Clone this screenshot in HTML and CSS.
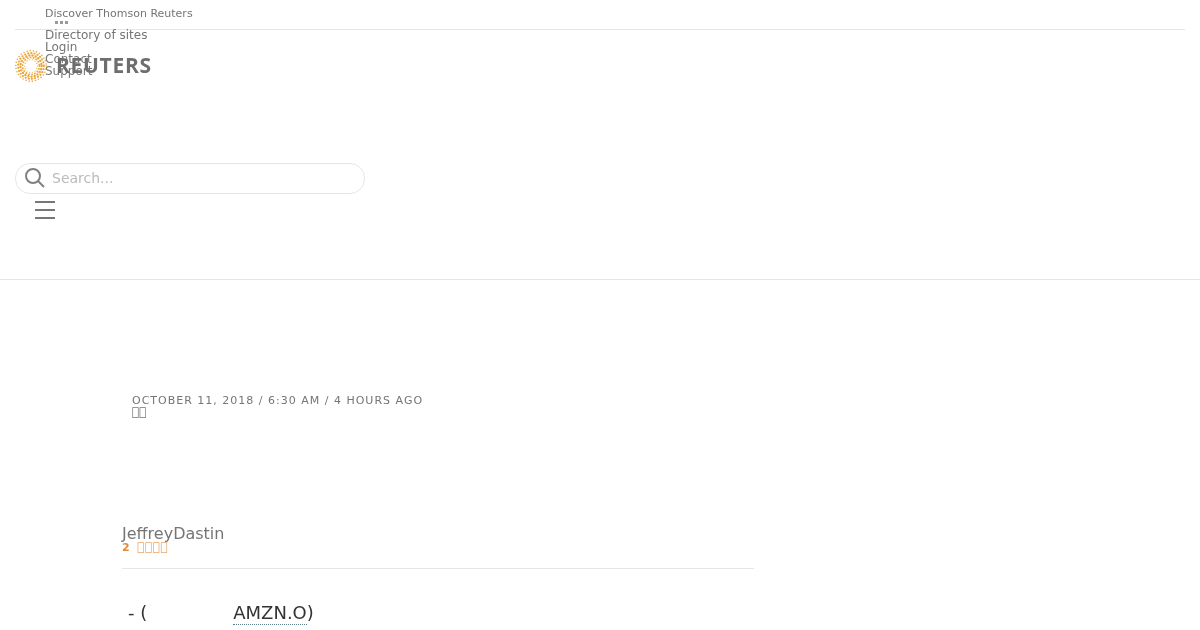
FILE: index.html
```html
<!DOCTYPE html>
<html>
	<head>
		<meta charset="utf-8" />
		<title>Reuters</title>
		<link rel="stylesheet" href="styles.css">
	</head>
	<body>
		<div class="header">
			<div class="topBar">
				<div class="discover">Discover Thomson Reuters</div>
				<div class="dots"><i></i><i></i><i></i></div>
			</div>
			<div class="brandRow">
				<ul class="siteMenu">
					<li>Directory of sites</li>
					<li>Login</li>
					<li>Contact</li>
					<li>Support</li>
				</ul>
				<div class="logo">
					<svg class="sunburst" width="34" height="34" viewBox="0 -1 34 34">
						<circle class="ring1" cx="17" cy="17" r="15.2"/>
						<circle class="ring2" cx="17" cy="17" r="12.9"/>
						<circle class="ring3" cx="17" cy="17" r="10.6"/>
						<circle class="ring4" cx="17" cy="17" r="8.4"/>
						<circle class="ring5" cx="17" cy="17" r="6.4"/>
					</svg>
					<span class="logoText">REUTERS</span>
				</div>
			</div>
			<div class="searchBox">
				<svg width="20" height="20" viewBox="0 0 20 20" class="searchIcon">
					<circle cx="8" cy="8" r="7"/>
					<path d="M13 13l6 6"/>
				</svg>
				<span class="placeholder">Search...</span>
			</div>
			<div class="burger"><i></i><i></i><i></i></div>
		</div>
		<div class="article">
			<div class="dateLine">October 11, 2018 / 6:30 AM / 4 hours ago</div>
			<div class="tag">&#xE000;&#xE000;</div>
			<div class="authorBox">
				<div class="author">JeffreyDastin</div>
				<div class="minRead"><b>2</b> <span>&#xE000;&#xE000;&#xE000;&#xE000;</span></div>
			</div>
			<p class="lead">- (<span class="gap"></span><a href="javascript:;">AMZN.O</a>)</p>
		</div>
	</body>
</html>
```

FILE: styles.css
```css
*{
	margin: 0;
	padding: 0;
	box-sizing: border-box;
}
html,body{
	height: 630px;
	overflow: hidden;
}
body{
	background-color: #fff;
	font-family: "DejaVu Sans", sans-serif;
	color: #757575;
}
ul li{
	list-style: none;
}
.header{
	height: 280px;
	padding: 0 15px;
	border-bottom: 1px #e6e6e6 solid;
	will-change: transform;
}
.topBar{
	height: 30px;
	padding: 7px 0 0 30px;
	border-bottom: 1px #e6e6e6 solid;
}
.discover{
	font-size: 11px;
	line-height: 13px;
}
.dots{
	display: flex;
	gap: 2px;
	margin: 1px 0 0 10px;
}
.dots i{
	width: 3px;
	height: 3px;
	background-color: #999;
}
.brandRow{
	position: relative;
	height: 134px;
}
.siteMenu{
	margin: -1px 0 0 30px;
	font-size: 12px;
	line-height: 12px;
}
.logo{
	position: absolute;
	left: -1px;
	top: 19px;
	display: flex;
	align-items: center;
}
.sunburst circle{
	fill: none;
	stroke: #e9a63f;
	stroke-linecap: round;
}
.ring1{
	stroke-width: 1.6;
	stroke-dasharray: 0 3.2;
}
.ring2{
	stroke-width: 2.2;
	stroke-dasharray: 0 3.2;
}
.ring3{
	stroke-width: 2.4;
	stroke-dasharray: 0 3.2;
}
.ring4{
	stroke-width: 1.9;
	stroke-dasharray: 0 3;
}
.ring5{
	stroke-width: 1.2;
	stroke-dasharray: 0 2.8;
}
.logoText{
	margin-left: 8px;
	font-family: "Open Sans", sans-serif;
	font-size: 21px;
	font-weight: 700;
	line-height: 34px;
	letter-spacing: 0.7px;
	color: #6e6e6e;
}
.searchBox{
	display: flex;
	align-items: center;
	width: 350px;
	height: 31px;
	padding-left: 9px;
	border: 1px #e6e6e6 solid;
	border-radius: 15px;
}
.searchIcon{
	margin-top: -2px;
	fill: none;
	stroke: #808080;
	stroke-width: 2;
}
.placeholder{
	margin: -1px 0 0 7px;
	font-size: 14px;
	color: #bbb;
}
.burger{
	display: flex;
	flex-direction: column;
	gap: 6px;
	width: 20px;
	margin: 7px 0 0 20px;
}
.burger i{
	height: 2px;
	background-color: #777;
}
.article{
	width: 632px;
	margin-left: 122px;
	padding-top: 115px;
	will-change: transform;
}
.dateLine{
	margin-left: 10px;
	font-size: 11px;
	line-height: 12px;
	letter-spacing: 1px;
	text-transform: uppercase;
}
.tag{
	margin-left: 10px;
	font-size: 12px;
	line-height: 10px;
}
.authorBox{
	height: 45px;
	margin-top: 107px;
	border-bottom: 1px #e6e6e6 solid;
}
.author{
	font-size: 16px;
	line-height: 20px;
}
.minRead{
	margin-top: -1px;
	font-size: 11px;
	line-height: 9px;
	color: #e08a3c;
}
.minRead span{
	margin-left: 4px;
	font-size: 12px;
	letter-spacing: 0.6px;
	opacity: 0.75;
}
.lead{
	margin: 31px 0 0 6px;
	font-size: 18px;
	line-height: 25px;
	color: #333;
}
.gap{
	display: inline-block;
	width: 86px;
}
.lead a{
	padding-bottom: 1px;
	color: #333;
	text-decoration: none;
	border-bottom: 1px dotted #5a7f88;
}
```
